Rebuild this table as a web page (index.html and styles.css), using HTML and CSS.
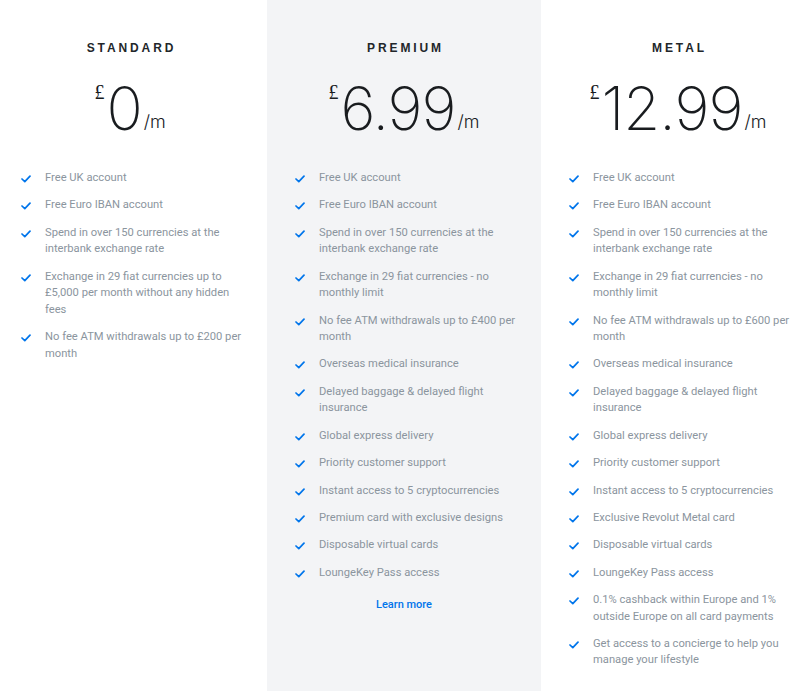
FILE: index.html
```html
<!DOCTYPE html>
<html>
<head>
<meta charset="utf-8">
<link rel="stylesheet" href="styles.css">
</head>
<body>
<div class="plans">
  <section class="plan">
    <h2 class="plan-name">STANDARD</h2>
    <div class="price"><span class="cur">£</span><span class="amount">0</span><span class="per">/m</span></div>
    <ul class="features">
      <li><svg class="check" viewBox="0 0 10 8"><polyline points="1,4 3.8,6.6 9,1.2"/></svg><span>Free UK account</span></li>
      <li><svg class="check" viewBox="0 0 10 8"><polyline points="1,4 3.8,6.6 9,1.2"/></svg><span>Free Euro IBAN account</span></li>
      <li><svg class="check" viewBox="0 0 10 8"><polyline points="1,4 3.8,6.6 9,1.2"/></svg><span>Spend in over 150 currencies at the interbank exchange rate</span></li>
      <li><svg class="check" viewBox="0 0 10 8"><polyline points="1,4 3.8,6.6 9,1.2"/></svg><span>Exchange in 29 fiat currencies up to £5,000 per month without any hidden fees</span></li>
      <li><svg class="check" viewBox="0 0 10 8"><polyline points="1,4 3.8,6.6 9,1.2"/></svg><span>No fee ATM withdrawals up to £200 per month</span></li>
    </ul>
  </section>
  <section class="plan plan-featured">
    <h2 class="plan-name">PREMIUM</h2>
    <div class="price"><span class="cur">£</span><span class="amount">6.99</span><span class="per">/m</span></div>
    <ul class="features">
      <li><svg class="check" viewBox="0 0 10 8"><polyline points="1,4 3.8,6.6 9,1.2"/></svg><span>Free UK account</span></li>
      <li><svg class="check" viewBox="0 0 10 8"><polyline points="1,4 3.8,6.6 9,1.2"/></svg><span>Free Euro IBAN account</span></li>
      <li><svg class="check" viewBox="0 0 10 8"><polyline points="1,4 3.8,6.6 9,1.2"/></svg><span>Spend in over 150 currencies at the interbank exchange rate</span></li>
      <li><svg class="check" viewBox="0 0 10 8"><polyline points="1,4 3.8,6.6 9,1.2"/></svg><span>Exchange in 29 fiat currencies - no monthly limit</span></li>
      <li><svg class="check" viewBox="0 0 10 8"><polyline points="1,4 3.8,6.6 9,1.2"/></svg><span>No fee ATM withdrawals up to £400 per month</span></li>
      <li><svg class="check" viewBox="0 0 10 8"><polyline points="1,4 3.8,6.6 9,1.2"/></svg><span>Overseas medical insurance</span></li>
      <li><svg class="check" viewBox="0 0 10 8"><polyline points="1,4 3.8,6.6 9,1.2"/></svg><span>Delayed baggage &amp; delayed flight insurance</span></li>
      <li><svg class="check" viewBox="0 0 10 8"><polyline points="1,4 3.8,6.6 9,1.2"/></svg><span>Global express delivery</span></li>
      <li><svg class="check" viewBox="0 0 10 8"><polyline points="1,4 3.8,6.6 9,1.2"/></svg><span>Priority customer support</span></li>
      <li><svg class="check" viewBox="0 0 10 8"><polyline points="1,4 3.8,6.6 9,1.2"/></svg><span>Instant access to 5 cryptocurrencies</span></li>
      <li><svg class="check" viewBox="0 0 10 8"><polyline points="1,4 3.8,6.6 9,1.2"/></svg><span>Premium card with exclusive designs</span></li>
      <li><svg class="check" viewBox="0 0 10 8"><polyline points="1,4 3.8,6.6 9,1.2"/></svg><span>Disposable virtual cards</span></li>
      <li><svg class="check" viewBox="0 0 10 8"><polyline points="1,4 3.8,6.6 9,1.2"/></svg><span>LoungeKey Pass access</span></li>
    </ul>
    <a class="learn" href="#">Learn more</a>
  </section>
  <section class="plan">
    <h2 class="plan-name">METAL</h2>
    <div class="price"><span class="cur">£</span><span class="amount">12.99</span><span class="per">/m</span></div>
    <ul class="features">
      <li><svg class="check" viewBox="0 0 10 8"><polyline points="1,4 3.8,6.6 9,1.2"/></svg><span>Free UK account</span></li>
      <li><svg class="check" viewBox="0 0 10 8"><polyline points="1,4 3.8,6.6 9,1.2"/></svg><span>Free Euro IBAN account</span></li>
      <li><svg class="check" viewBox="0 0 10 8"><polyline points="1,4 3.8,6.6 9,1.2"/></svg><span>Spend in over 150 currencies at the interbank exchange rate</span></li>
      <li><svg class="check" viewBox="0 0 10 8"><polyline points="1,4 3.8,6.6 9,1.2"/></svg><span>Exchange in 29 fiat currencies - no monthly limit</span></li>
      <li><svg class="check" viewBox="0 0 10 8"><polyline points="1,4 3.8,6.6 9,1.2"/></svg><span>No fee ATM withdrawals up to £600 per month</span></li>
      <li><svg class="check" viewBox="0 0 10 8"><polyline points="1,4 3.8,6.6 9,1.2"/></svg><span>Overseas medical insurance</span></li>
      <li><svg class="check" viewBox="0 0 10 8"><polyline points="1,4 3.8,6.6 9,1.2"/></svg><span>Delayed baggage &amp; delayed flight insurance</span></li>
      <li><svg class="check" viewBox="0 0 10 8"><polyline points="1,4 3.8,6.6 9,1.2"/></svg><span>Global express delivery</span></li>
      <li><svg class="check" viewBox="0 0 10 8"><polyline points="1,4 3.8,6.6 9,1.2"/></svg><span>Priority customer support</span></li>
      <li><svg class="check" viewBox="0 0 10 8"><polyline points="1,4 3.8,6.6 9,1.2"/></svg><span>Instant access to 5 cryptocurrencies</span></li>
      <li><svg class="check" viewBox="0 0 10 8"><polyline points="1,4 3.8,6.6 9,1.2"/></svg><span>Exclusive Revolut Metal card</span></li>
      <li><svg class="check" viewBox="0 0 10 8"><polyline points="1,4 3.8,6.6 9,1.2"/></svg><span>Disposable virtual cards</span></li>
      <li><svg class="check" viewBox="0 0 10 8"><polyline points="1,4 3.8,6.6 9,1.2"/></svg><span>LoungeKey Pass access</span></li>
      <li><svg class="check" viewBox="0 0 10 8"><polyline points="1,4 3.8,6.6 9,1.2"/></svg><span>0.1% cashback within Europe and 1% outside Europe on all card payments</span></li>
      <li><svg class="check" viewBox="0 0 10 8"><polyline points="1,4 3.8,6.6 9,1.2"/></svg><span>Get access to a concierge to help you manage your lifestyle</span></li>
    </ul>
  </section>
</div>
</body>
</html>
```

FILE: styles.css
```css
html, body {
  margin: 0;
  padding: 0;
  background: #ffffff;
  overflow: hidden;
}

body {
  font-family: Roboto, "Liberation Sans", sans-serif;
  height: 691px;
}

.plans {
  display: grid;
  grid-template-columns: 274px 274px 274px;
  width: 822px;
  margin-left: -7px;
  height: 691px;
}

.plan {
  padding: 41px 0 0;
  display: flex;
  flex-direction: column;
  align-items: stretch;
}

.plan-featured {
  background: #f3f4f6;
}

.plan-name {
  margin: 0;
  text-align: center;
  font-family: "Liberation Sans", Arial, sans-serif;
  font-size: 12px;
  font-weight: 700;
  letter-spacing: 2.9px;
  line-height: 14px;
  color: #22262a;
  padding-left: 3px;
}

.price {
  display: flex;
  justify-content: center;
  align-items: flex-start;
  margin-top: 18px;
  height: 70px;
  color: #191c1f;
}

.cur {
  font-family: "Liberation Serif", serif;
  font-size: 20px;
  line-height: 20px;
  margin-top: 9px;
  margin-right: 2px;
}

.amount {
  font-family: Inter, sans-serif;
  font-weight: 200;
  font-size: 60px;
  line-height: 70px;
  letter-spacing: -1px;
}

.per {
  font-family: Inter, sans-serif;
  font-weight: 300;
  font-size: 18px;
  line-height: 18px;
  margin-top: 40px;
  margin-left: 2px;
}

.features {
  list-style: none;
  margin: 27px 0 0;
  padding: 0 20px 0 28px;
  display: flex;
  flex-direction: column;
  gap: 10.9px;
}

.features li {
  display: flex;
  align-items: flex-start;
  font-size: 11.2px;
  line-height: 16.5px;
  color: #8b959e;
}

.check {
  flex: none;
  width: 10px;
  height: 8px;
  margin-top: 5px;
  margin-right: 14px;
  fill: none;
  stroke: #0075eb;
  stroke-width: 1.7;
  stroke-linecap: round;
  stroke-linejoin: round;
}

.features li span {
  flex: 1;
}

.learn {
  display: block;
  text-align: center;
  margin-top: 17px;
  font-size: 11px;
  font-weight: 500;
  color: #0075eb;
  text-decoration: none;
}
```
